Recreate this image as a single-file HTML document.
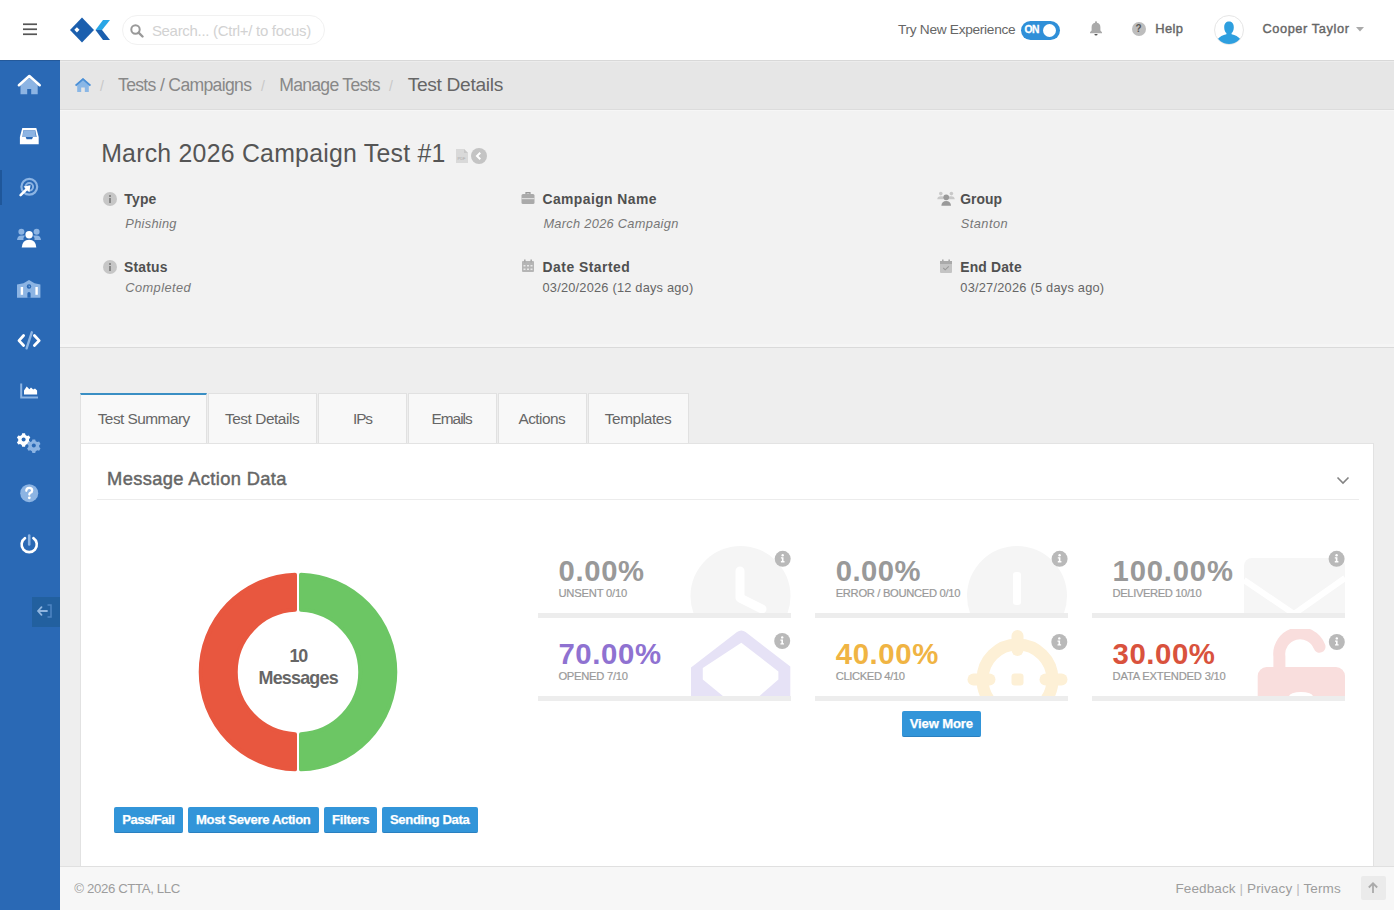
<!DOCTYPE html>
<html><head><meta charset="utf-8">
<style>
*{box-sizing:border-box;margin:0;padding:0}
html,body{width:1394px;height:910px;overflow:hidden;font-family:"Liberation Sans",sans-serif;background:#f0f0f0;color:#555}
.a{position:absolute}
.t{position:absolute;white-space:nowrap;line-height:1}
#hdr{position:absolute;left:0;top:0;width:1394px;height:60px;background:#fff}
#side{position:absolute;left:0;top:60px;width:60px;height:850px;background:#2a69b5;border-top:1px solid #24599a}
#bc{position:absolute;left:60px;top:60px;width:1334px;height:50px;background:#e6e6e6;border-top:1px solid #d8d8d8;border-bottom:1px solid #dcdcdc;box-shadow:inset 0 1px 0 #ececec}
#info{position:absolute;left:60px;top:110px;width:1334px;height:238px;background:#f2f2f2;border-top:1px solid #f6f6f6;border-bottom:1px solid #dadada;box-shadow:inset 0 -3px 0 #f5f5f5}
#main{position:absolute;left:60px;top:348px;width:1334px;height:518px;background:#eeeeee}
#foot{position:absolute;left:60px;top:866px;width:1334px;height:44px;background:#f7f7f7;border-top:1px solid #e0e0e0}
.lbl{font-weight:bold;color:#505050}
.val{font-style:italic;color:#777}
.val2{color:#666}
.tab{position:absolute;top:393px;height:50px;background:#f8f8f8;border:1px solid #e1e1e1;border-bottom:none}
.tt{color:#666}
#panel{position:absolute;left:80px;top:443px;width:1294px;height:423px;background:#fff;border-left:1px solid #e2e2e2;border-right:1px solid #e2e2e2;border-top:1px solid #e3e3e3}
.card{position:absolute;width:253px;height:72px;background:#fff;border-bottom:5px solid #ededed;overflow:hidden}
.pct{font-weight:bold}
.sub{color:#999;-webkit-text-stroke:0.2px #999}
.ii{position:absolute;width:16px;height:16px;border-radius:50%;background:#b5b5b5}
.btn{position:absolute;top:807px;height:26px;background:#3295d9;border-radius:2px;border-bottom:1px solid #2a80c0}
.bt{color:#fff;font-weight:bold;-webkit-text-stroke:0.25px #fff}
.lb{fill:#8cb4e3}
</style></head><body>
<div id="hdr"></div>
<div id="side"></div>
<div id="bc"></div>
<div id="info"></div>
<div id="main"></div>
<div id="foot"></div>

<!-- header -->
<svg class="a" style="left:22px;top:22px" width="16" height="14"><rect x="1" y="1.4" width="14" height="1.7" fill="#555"/><rect x="1" y="6.4" width="14" height="1.7" fill="#555"/><rect x="1" y="11.4" width="14" height="1.7" fill="#555"/></svg>
<svg class="a" style="left:68px;top:15px" width="44" height="30" viewBox="0 0 44 30">
 <polygon points="2,15 14,2.5 26,15 14,27.5" fill="#1b5fae"/>
 <polygon points="6.3,14.8 8.9,12.2 11.5,14.8 8.9,17.4" fill="#fff"/>
 <polygon points="27.5,15 35,5 42,5 34,15" fill="#29a6e6"/>
 <polygon points="27.5,15 34,15 42,25 35,25" fill="#1b5fae"/>
</svg>
<div class="a" style="left:122px;top:15px;width:203px;height:30px;border:1px solid #f1f1f1;border-radius:15px;background:#fff"></div>
<svg class="a" style="left:130px;top:24px" width="14" height="14" viewBox="0 0 14 14"><circle cx="5.5" cy="5.5" r="4.2" fill="none" stroke="#999" stroke-width="2"/><line x1="8.6" y1="8.6" x2="12.5" y2="12.5" stroke="#999" stroke-width="2.4" stroke-linecap="round"/></svg>
<div class="t" style="left:151.9px;top:24.0px;font-size:14.97px;letter-spacing:-0.29px;color:#d2d2d2">Search... (Ctrl+/ to focus)</div>

<div class="t" style="left:897.9px;top:23.0px;font-size:13.70px;letter-spacing:-0.29px;color:#666">Try New Experience</div>
<div class="a" style="left:1021px;top:21px;width:39px;height:19px;border-radius:10px;background:#2f8fd8"></div>
<div class="t" style="left:1024.4px;top:25px;font-size:10.3px;font-weight:bold;color:#fff;-webkit-text-stroke:0.3px #fff;letter-spacing:-0.3px">ON</div>
<div class="a" style="left:1043px;top:23.5px;width:13px;height:13px;border-radius:50%;background:#fff"></div>
<svg class="a" style="left:1089px;top:20px" width="14" height="16" viewBox="0 0 14 16"><path d="M7 1.2c-.6 0-1 .4-1 1v.6C3.8 3.3 2.6 5 2.6 7.2v3.3L1 12.3v.9h12v-.9l-1.6-1.8V7.2c0-2.2-1.2-3.9-3.4-4.4v-.6c0-.6-.4-1-1-1z" fill="#aaa"/><path d="M5.4 14h3.2a1.6 1.6 0 0 1-3.2 0z" fill="#555"/></svg>
<div class="a" style="left:1132px;top:21.5px;width:14px;height:14px;border-radius:50%;background:#bdbdbd"></div>
<div class="t" style="left:1135.5px;top:23.5px;font-size:10px;font-weight:bold;color:#555">?</div>
<div class="t" style="left:1155.3px;top:23.0px;font-size:12.94px;letter-spacing:0.35px;color:#666;-webkit-text-stroke:0.4px #666">Help</div>
<div class="a" style="left:1214px;top:15px;width:30px;height:30px;border-radius:50%;border:1px solid #e6e6e6;background:#fff;overflow:hidden">
 <svg width="28" height="28" viewBox="0 0 28 28"><path d="M9.2 11.2c0-3.7 2-5.6 4.8-5.6s4.8 1.9 4.8 5.6c0 2.7-.9 4.8-2.2 5.9v1.1c3.6.7 6.9 2.3 8.6 4.9V29H2.8v-5.9c1.7-2.6 5-4.2 8.6-4.9v-1.1c-1.3-1.1-2.2-3.2-2.2-5.9z" fill="#2e9fdf"/></svg>
</div>
<div class="t" style="left:1262.4px;top:23.0px;font-size:12.79px;letter-spacing:0.60px;color:#666;-webkit-text-stroke:0.4px #666">Cooper Taylor</div>
<svg class="a" style="left:1355px;top:26px" width="10" height="6"><polygon points="1,1 9,1 5,5.5" fill="#aaa"/></svg>

<!-- sidebar -->
<div class="a" style="left:0;top:170px;width:2px;height:35px;background:#1f579a"></div>
<svg class="a" style="left:0;top:60px" width="60" height="560" viewBox="0 60 60 560">
 <!-- home -->
 <path class="lb" d="M20.5 85 L29.2 78 L37.7 85 V94.2 H31.2 V89 H27.2 V94.2 H20.5z"/>
 <path d="M18.9 85.2 L29.3 76 L39.7 85.2" stroke="#fff" stroke-width="2.6" fill="none" stroke-linecap="round" stroke-linejoin="round"/>
 <!-- inbox -->
 <path class="lb" d="M23.5 130.5 H35 L36 137 H22.5z"/>
 <path d="M22.3 128 H36.3 L38.7 137 V144.2 H19.9 V137z M22.3 137 H25.6 L26.6 139.3 H32 L33 137 H36.6 L35.3 130.2 H23.3z" fill="#fff" fill-rule="evenodd"/>
 <!-- target -->
 <circle cx="29.3" cy="186.8" r="7.9" stroke="#8cb4e3" stroke-width="2.2" fill="none"/>
 <circle cx="29.3" cy="186.8" r="3.8" stroke="#8cb4e3" stroke-width="2" fill="none"/>
 <path d="M20.6 195.2 L28.5 187.3" stroke="#fff" stroke-width="2.6" stroke-linecap="round"/>
 <path d="M30.5 185.2 L23.6 186.4 L29.4 192.2z" fill="#fff"/>
 <!-- users -->
 <circle class="lb" cx="21.4" cy="231.7" r="3"/><circle class="lb" cx="36.6" cy="231.7" r="3"/>
 <path class="lb" d="M17 240 Q17.5 235.6 21.5 235.6 H25 Q23.2 237.5 23.5 240z M41 240 Q40.5 235.6 36.5 235.6 H33 Q34.8 237.5 34.5 240z"/>
 <circle cx="29.1" cy="234.8" r="3.7" fill="#fff"/>
 <path d="M21.7 247.5 Q22.2 240 29.1 239.7 Q36 240 36.3 247.5z" fill="#fff"/>
 <!-- school -->
 <path class="lb" d="M17 284.5 L23.5 283.2 L29 280 L34.5 283.2 L40.4 284.5 V297.7 H17z"/>
 <rect x="20.7" y="287" width="2.4" height="7.8" fill="#fff"/><rect x="35.4" y="287" width="2.4" height="7.8" fill="#fff"/>
 <circle cx="29" cy="286.5" r="2.2" fill="#2a69b5"/><path d="M29 285.5 v1.2 h1.1" stroke="#8cb4e3" stroke-width="0.8" fill="none"/>
 <path d="M27.4 297.7 V293.5 a1.6 1.6 0 0 1 3.2 0 V297.7z" fill="#2a69b5"/>
 <!-- code -->
 <path d="M23.6 335.5 L19 340.6 L23.6 345.5" stroke="#fff" stroke-width="2.8" fill="none" stroke-linecap="round" stroke-linejoin="round"/>
 <path d="M34.4 335.5 L39.2 340.6 L34.4 345.5" stroke="#fff" stroke-width="2.8" fill="none" stroke-linecap="round" stroke-linejoin="round"/>
 <path d="M31.8 332.3 L26.6 348.3" stroke="#8cb4e3" stroke-width="2.4" stroke-linecap="round"/>
 <!-- chart -->
 <path d="M21.2 383.4 V397.5 H38" stroke="#8cb4e3" stroke-width="2" fill="none"/>
 <path d="M24 394.6 V390.5 L26.7 386.5 L29.4 389.2 L31 387.5 L33.2 389.5 L35 388.6 L37.1 390.6 V394.6z" fill="#fff"/>
 <!-- gears -->
 <g transform="translate(23.6 439.4)"><path d="M-1.4-6.2h2.8l.5 1.8 1.6.9 1.8-.5 1.4 2.4-1.3 1.3v1.8l1.3 1.3-1.4 2.4-1.8-.5-1.6.9-.5 1.8h-2.8l-.5-1.8-1.6-.9-1.8.5-1.4-2.4 1.3-1.3v-1.8l-1.3-1.3 1.4-2.4 1.8.5 1.6-.9z" fill="#fff"/><circle r="2" fill="#2a69b5"/></g>
 <g transform="translate(33.8 445.6)"><path d="M-1.4-6.2h2.8l.5 1.8 1.6.9 1.8-.5 1.4 2.4-1.3 1.3v1.8l1.3 1.3-1.4 2.4-1.8-.5-1.6.9-.5 1.8h-2.8l-.5-1.8-1.6-.9-1.8.5-1.4-2.4 1.3-1.3v-1.8l-1.3-1.3 1.4-2.4 1.8.5 1.6-.9z" fill="#8cb4e3"/><circle r="2" fill="#2a69b5"/></g>
 <!-- help -->
 <circle class="lb" cx="29.2" cy="493.2" r="9"/>
 <path d="M26.3 490.8 Q26.3 487.8 29.3 487.8 Q32.2 487.8 32.2 490.4 Q32.2 492 30.4 492.8 Q29.3 493.3 29.3 494.6" stroke="#fff" stroke-width="2.2" fill="none" stroke-linecap="round"/>
 <circle cx="29.3" cy="497.8" r="1.4" fill="#fff"/>
 <!-- power -->
 <path d="M25 538.2 A7.6 7.6 0 1 0 33.4 538.2" stroke="#fff" stroke-width="2.6" fill="none" stroke-linecap="round"/>
 <path d="M29.2 535.5 V544.5" stroke="#8cb4e3" stroke-width="2.6" stroke-linecap="round"/>
</svg>
<div class="a" style="left:32px;top:597px;width:28px;height:30px;background:#22609f"></div>
<svg class="a" style="left:36px;top:603px" width="18" height="16" viewBox="0 0 18 16"><path d="M2 8h9M5.5 4.2 2 8l3.5 3.8" stroke="#8fb5df" stroke-width="1.8" fill="none" stroke-linecap="round" stroke-linejoin="round"/><path d="M11.5 2h3.5v12h-3.5" stroke="#4f85c4" stroke-width="1.5" fill="none"/></svg>

<!-- breadcrumb -->
<svg class="a" style="left:74px;top:77px" width="18" height="16" viewBox="0 0 18 16"><path d="M9 1 1 8h2.2v7h4v-4.5h3.6V15h4V8H17z" fill="#8ab7e6"/><path d="M9 1 1 8l1.2 1.2L9 3.3l6.8 5.9L17 8z" fill="#4a8fd6"/></svg>
<div class="t" style="left:100px;top:79px;font-size:14px;color:#c8c8c8">/</div>
<div class="t" style="left:118.0px;top:77.0px;font-size:17.60px;letter-spacing:-0.67px;color:#888">Tests / Campaigns</div>
<div class="t" style="left:261px;top:79px;font-size:14px;color:#c8c8c8">/</div>
<div class="t" style="left:279.2px;top:77.0px;font-size:17.60px;letter-spacing:-0.71px;color:#888">Manage Tests</div>
<div class="t" style="left:389px;top:79px;font-size:14px;color:#c8c8c8">/</div>
<div class="t" style="left:407.7px;top:75.0px;font-size:19.19px;letter-spacing:-0.33px;color:#666">Test Details</div>

<!-- info -->
<div class="t" style="left:101.2px;top:142.0px;font-size:24.85px;letter-spacing:0.24px;color:#555">March 2026 Campaign Test #1</div>
<svg class="a" style="left:455px;top:148px" width="14" height="16" viewBox="0 0 14 16"><path d="M1 1h8l4 4v10H1z" fill="#d9d9d9"/><path d="M9 1v4h4" fill="#c8c8c8"/><text x="2.5" y="12" font-size="4" fill="#aaa" font-family="Liberation Sans">PDF</text></svg>
<div class="a" style="left:471px;top:148px;width:16px;height:16px;border-radius:50%;background:#c4c4c4"></div>
<svg class="a" style="left:471px;top:148px" width="16" height="16"><polyline points="9.3,4.8 6,8 9.3,11.2" stroke="#fff" stroke-width="2" fill="none"/></svg>

<div class="ii" style="left:103px;top:192px;width:14px;height:14px;background:#c6c6c6"></div>
<div class="a" style="left:109.3px;top:195px;width:1.6px;height:1.6px;background:#888"></div><div class="a" style="left:109.3px;top:197.5px;width:1.6px;height:5px;background:#888"></div>
<div class="t lbl" style="left:124.3px;top:193.0px;font-size:13.90px;letter-spacing:0.20px">Type</div>
<div class="t val" style="left:125.3px;top:218.0px;font-size:12.80px;letter-spacing:0.30px">Phishing</div>
<div class="ii" style="left:103px;top:260px;width:14px;height:14px;background:#c6c6c6"></div>
<div class="a" style="left:109.3px;top:263px;width:1.6px;height:1.6px;background:#888"></div><div class="a" style="left:109.3px;top:265.5px;width:1.6px;height:5px;background:#888"></div>
<div class="t lbl" style="left:124.0px;top:261.0px;font-size:13.90px;letter-spacing:0.22px">Status</div>
<div class="t val" style="left:125.3px;top:282.0px;font-size:12.80px;letter-spacing:0.43px">Completed</div>

<svg class="a" style="left:521px;top:191px" width="14" height="14" viewBox="0 0 14 14"><path d="M5 1.5h4v1.5H5z" fill="none" stroke="#999" stroke-width="1.2"/><rect x="0.5" y="3" width="13" height="10" rx="1.5" fill="#aaa"/><rect x="0.5" y="7" width="13" height="1.2" fill="#ddd"/></svg>
<div class="t lbl" style="left:542.5px;top:193.0px;font-size:13.90px;letter-spacing:0.42px">Campaign Name</div>
<div class="t val" style="left:543.4px;top:218.0px;font-size:12.80px;letter-spacing:0.30px">March 2026 Campaign</div>
<svg class="a" style="left:521px;top:259px" width="14" height="14" viewBox="0 0 14 14"><rect x="1" y="2" width="12" height="11" rx="1" fill="#b5b5b5"/><rect x="3" y="0.5" width="1.6" height="3" fill="#aaa"/><rect x="9.4" y="0.5" width="1.6" height="3" fill="#aaa"/><rect x="2.5" y="6" width="2" height="1.5" fill="#e8e8e8"/><rect x="6" y="6" width="2" height="1.5" fill="#e8e8e8"/><rect x="9.5" y="6" width="2" height="1.5" fill="#e8e8e8"/><rect x="2.5" y="9.5" width="2" height="1.5" fill="#e8e8e8"/><rect x="6" y="9.5" width="2" height="1.5" fill="#e8e8e8"/><rect x="9.5" y="9.5" width="2" height="1.5" fill="#e8e8e8"/></svg>
<div class="t lbl" style="left:542.5px;top:261.0px;font-size:13.90px;letter-spacing:0.50px">Date Started</div>
<div class="t val2" style="left:542.5px;top:282.0px;font-size:12.80px;letter-spacing:0.21px">03/20/2026 (12 days ago)</div>

<svg class="a" style="left:937px;top:191px" width="18" height="15" viewBox="0 0 18 15"><circle cx="3.8" cy="2.6" r="1.8" fill="#c9c9c9"/><circle cx="14.4" cy="2.6" r="1.8" fill="#c9c9c9"/><path d="M0.3 8.2c0-2 1.2-3 3.5-3s2.8.6 2.8.6v2.4z M17.7 8.2c0-2-1.2-3-3.5-3s-2.8.6-2.8.6v2.4z" fill="#c9c9c9"/><circle cx="9.2" cy="6.3" r="2.9" fill="#9a9a9a"/><path d="M4.4 14.8c0-3 2-4.8 4.8-4.8s4.8 1.8 4.8 4.8z" fill="#9a9a9a"/></svg>
<div class="t lbl" style="left:960.3px;top:193.0px;font-size:13.90px;letter-spacing:0.00px">Group</div>
<div class="t val" style="left:960.7px;top:218.0px;font-size:12.80px;letter-spacing:0.49px">Stanton</div>
<svg class="a" style="left:939px;top:259px" width="14" height="15" viewBox="0 0 14 15"><rect x="1" y="2" width="12" height="12" rx="1" fill="#c4c4c4"/><rect x="1" y="2" width="12" height="3" fill="#aaa"/><rect x="3" y="0.5" width="1.6" height="3" fill="#aaa"/><rect x="9.4" y="0.5" width="1.6" height="3" fill="#aaa"/><polyline points="4.3,9 6.2,10.8 9.8,7.3" stroke="#999" stroke-width="1.1" fill="none"/></svg>
<div class="t lbl" style="left:960.3px;top:261.0px;font-size:13.90px;letter-spacing:0.16px">End Date</div>
<div class="t val2" style="left:960.3px;top:282.0px;font-size:12.80px;letter-spacing:0.23px">03/27/2026 (5 days ago)</div>

<!-- tabs -->
<div class="tab" style="left:80px;width:127px;border-top:2px solid #3a8fc4;background:#f9f9f9"></div>
<div class="tab" style="left:208px;width:109px"></div>
<div class="tab" style="left:318px;width:89px"></div>
<div class="tab" style="left:408px;width:89px"></div>
<div class="tab" style="left:498px;width:89px"></div>
<div class="tab" style="left:588px;width:101px"></div>
<div class="t tt" style="left:97.7px;top:411.0px;font-size:15.40px;letter-spacing:-0.53px">Test Summary</div>
<div class="t tt" style="left:225.0px;top:411.0px;font-size:15.40px;letter-spacing:-0.45px">Test Details</div>
<div class="t tt" style="left:353.1px;top:411.0px;font-size:15.40px;letter-spacing:-1.20px">IPs</div>
<div class="t tt" style="left:431.4px;top:411.0px;font-size:15.40px;letter-spacing:-0.96px">Emails</div>
<div class="t tt" style="left:518.4px;top:411.0px;font-size:15.40px;letter-spacing:-0.53px">Actions</div>
<div class="t tt" style="left:604.7px;top:411.0px;font-size:15.40px;letter-spacing:-0.39px">Templates</div>

<div id="panel"></div>
<div class="t" style="left:107.1px;top:470.0px;font-size:18.31px;letter-spacing:0.36px;color:#666;-webkit-text-stroke:0.45px #666">Message Action Data</div>
<div class="a" style="left:97px;top:499px;width:1262px;height:1px;background:#ececec"></div>
<svg class="a" style="left:1336px;top:476px" width="14" height="9"><polyline points="1.5,1.5 7,7 12.5,1.5" stroke="#838383" stroke-width="1.6" fill="none"/></svg>

<!-- donut -->
<svg class="a" style="left:198px;top:572px" width="200" height="200" viewBox="0 0 200 200">
 <path d="M97 2.65 A97.4 97.4 0 0 0 97 197.35 L97 162.13 A62.2 62.2 0 0 1 97 37.87z" fill="#e8573f" stroke="#e8573f" stroke-width="4" stroke-linejoin="round"/>
 <path d="M103 2.65 A97.4 97.4 0 0 1 103 197.35 L103 162.13 A62.2 62.2 0 0 0 103 37.87z" fill="#6cc664" stroke="#6cc664" stroke-width="4" stroke-linejoin="round"/>
</svg>
<div class="t" style="left:289.5px;top:648.0px;font-size:17.90px;letter-spacing:-1.20px;color:#666;font-weight:bold">10</div>
<div class="t" style="left:258.5px;top:670.0px;font-size:17.88px;letter-spacing:-0.75px;color:#666;font-weight:bold">Messages</div>

<div class="btn" style="left:114px;width:69px"></div>
<div class="btn" style="left:188px;width:131px"></div>
<div class="btn" style="left:324px;width:53px"></div>
<div class="btn" style="left:382px;width:96px"></div>
<div class="t bt" style="left:122.3px;top:813.0px;font-size:13.08px;letter-spacing:-0.53px">Pass/Fail</div>
<div class="t bt" style="left:196.0px;top:813.0px;font-size:13.08px;letter-spacing:-0.36px">Most Severe Action</div>
<div class="t bt" style="left:332.1px;top:813.0px;font-size:13.08px;letter-spacing:-0.29px">Filters</div>
<div class="t bt" style="left:390.0px;top:813.0px;font-size:13.08px;letter-spacing:-0.35px">Sending Data</div>

<!-- cards -->
<div class="card" style="left:538px;top:546px">
 <svg class="a" style="left:152px;top:0" width="101" height="67" viewBox="0 0 101 67"><circle cx="50.5" cy="50" r="50" fill="#f5f5f5"/><path d="M50 25 V52 L72 63" stroke="#fff" stroke-width="9" fill="none" stroke-linecap="round" stroke-linejoin="round"/></svg>
</div>
<div class="card" style="left:815px;top:546px">
 <svg class="a" style="left:152px;top:0" width="101" height="67" viewBox="0 0 101 67"><circle cx="50" cy="50" r="50" fill="#f5f5f5"/><rect x="46" y="26" width="8" height="33" rx="3" fill="#fff"/></svg>
</div>
<div class="card" style="left:1092px;top:546px">
 <svg class="a" style="left:152px;top:12px" width="101" height="55" viewBox="0 0 101 55"><rect x="0" y="0" width="101" height="70" rx="8" fill="#f6f6f6"/><polyline points="0,22 50,56 101,20" stroke="#fff" stroke-width="6" fill="none"/></svg>
</div>
<div class="card" style="left:538px;top:629px">
 <svg class="a" style="left:152px;top:0" width="101" height="67" viewBox="0 0 101 67"><path d="M1 38.5 L47 3 Q51.3 0 55.6 3 L100.3 37.5 V67 H1z" fill="#e6e2f6"/><path d="M12.8 39 L51.3 13.7 L88.4 42.4 V50.4 L69 67.5 H33.5 L12.8 50.4z" fill="#fff"/></svg>
</div>
<div class="card" style="left:815px;top:629px">
 <svg class="a" style="left:152px;top:0" width="101" height="67" viewBox="0 0 101 67"><circle cx="50.5" cy="50.5" r="35" fill="none" stroke="#fdf0d6" stroke-width="12"/><rect x="44.5" y="1" width="12" height="26" rx="6" fill="#fdf0d6"/><rect x="0.5" y="44.5" width="28" height="12" rx="6" fill="#fdf0d6"/><rect x="72.5" y="44.5" width="28" height="12" rx="6" fill="#fdf0d6"/><rect x="44.5" y="44.5" width="12" height="12" rx="3" fill="#fdf0d6"/></svg>
</div>
<div class="card" style="left:1092px;top:629px">
 <svg class="a" style="left:152px;top:0" width="101" height="67" viewBox="0 0 101 67"><path d="M35.4 45 V27.7 A20.8 20.8 0 0 1 75.5 17.7" fill="none" stroke="#f9dedd" stroke-width="12" stroke-linecap="round"/><rect x="13.7" y="38" width="87.3" height="40" rx="9" fill="#f9dedd"/><ellipse cx="57" cy="67.5" rx="12" ry="4.5" fill="#fff"/></svg>
</div>
<div class="t pct" style="left:558.6px;top:557.0px;font-size:29.23px;letter-spacing:0.65px;color:#999">0.00%</div>
<div class="t sub" style="left:558.4px;top:588.0px;font-size:11.19px;letter-spacing:-0.18px">UNSENT 0/10</div>
<div class="t pct" style="left:835.7px;top:557.0px;font-size:29.23px;letter-spacing:0.50px;color:#999">0.00%</div>
<div class="t sub" style="left:835.7px;top:588.0px;font-size:11.19px;letter-spacing:-0.31px">ERROR / BOUNCED 0/10</div>
<div class="t pct" style="left:1112.6px;top:557.0px;font-size:29.23px;letter-spacing:0.82px;color:#999">100.00%</div>
<div class="t sub" style="left:1112.6px;top:588.0px;font-size:11.19px;letter-spacing:-0.39px">DELIVERED 10/10</div>
<div class="t pct" style="left:558.4px;top:639.0px;font-size:29.37px;letter-spacing:0.61px;color:#8f72d1">70.00%</div>
<div class="t sub" style="left:558.4px;top:671.0px;font-size:11.19px;letter-spacing:-0.25px">OPENED 7/10</div>
<div class="t pct" style="left:835.7px;top:639.0px;font-size:29.37px;letter-spacing:0.61px;color:#f0b443">40.00%</div>
<div class="t sub" style="left:835.7px;top:671.0px;font-size:11.19px;letter-spacing:-0.37px">CLICKED 4/10</div>
<div class="t pct" style="left:1112.6px;top:639.0px;font-size:29.37px;letter-spacing:0.55px;color:#d9523d">30.00%</div>
<div class="t sub" style="left:1112.6px;top:671.0px;font-size:11.19px;letter-spacing:-0.19px">DATA EXTENDED 3/10</div>
<!-- info icons -->
<svg class="a" style="left:0;top:0" width="1394" height="910" viewBox="0 0 1394 910">
 <defs><g id="inf"><circle r="8" fill="#b9b9b9"/><circle cy="-3.6" r="1.2" fill="#fff"/><path d="M-1.8-1.6h2.6v3.9h1v1.3h-3.6v-1.3h1v-2.6h-1z" fill="#fff"/></g></defs>
 <use href="#inf" x="782.7" y="558.8"/><use href="#inf" x="1059.6" y="558.8"/><use href="#inf" x="1336.6" y="558.8"/>
 <use href="#inf" x="782.2" y="641"/><use href="#inf" x="1059.3" y="642"/><use href="#inf" x="1336.8" y="642"/>
</svg>

<div class="btn" style="left:902px;top:711px;width:79px;height:26px"></div>
<div class="t bt" style="left:909.7px;top:717.0px;font-size:13.08px;letter-spacing:-0.14px">View More</div>

<!-- footer -->
<div class="t" style="left:74.3px;top:882.0px;font-size:13.23px;letter-spacing:-0.37px;color:#9d9d9d">© 2026 CTTA, LLC</div>
<div class="t" style="left:1175.4px;top:882.0px;font-size:13.52px;letter-spacing:0.12px;color:#9d9d9d">Feedback <span style="color:#bbb">|</span> Privacy <span style="color:#bbb">|</span> Terms</div>
<div class="a" style="left:1361px;top:876px;width:25px;height:24px;background:#ebebeb;border-radius:2px"></div>
<svg class="a" style="left:1366px;top:881px" width="14" height="14" viewBox="0 0 14 14"><path d="M7 12V2.5M2.8 6.5 7 2.3l4.2 4.2" stroke="#aaa" stroke-width="1.8" fill="none"/></svg>
</body></html>
